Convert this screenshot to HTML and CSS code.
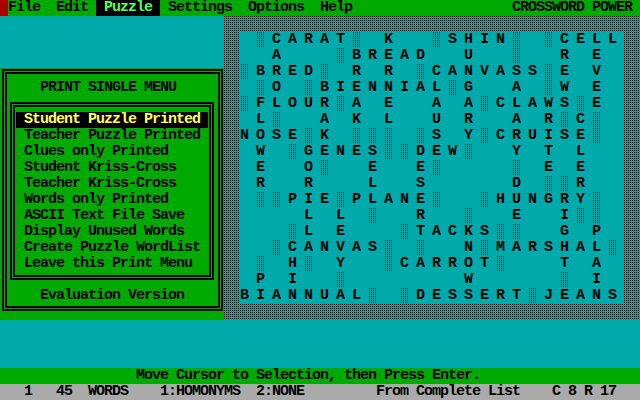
FILE: index.html
```html
<!DOCTYPE html>
<html>
<head>
<meta charset="utf-8">
<link rel="stylesheet" href="styles.css">
</head>
<body>
<div class="screen">
  <div class="menubar"><span class="mark"></span><span>File  Edit </span><span class="sel"> Puzzle </span><span> Settings  Options  Help</span><span class="brand">CROSSWORD POWER</span></div>
  <div class="main">
    <div class="panel">
      <div class="dbl">
        <div class="dbl-in">
          <div class="title">PRINT SINGLE MENU</div>
          <div class="dbl menu-box">
            <div class="dbl-in items">
              <div class="item active">Student Puzzle Printed</div>
              <div class="item">Teacher Puzzle Printed</div>
              <div class="item">Clues only Printed</div>
              <div class="item">Student Kriss-Cross</div>
              <div class="item">Teacher Kriss-Cross</div>
              <div class="item">Words only Printed</div>
              <div class="item">ASCII Text File Save</div>
              <div class="item">Display Unused Words</div>
              <div class="item">Create Puzzle WordList</div>
              <div class="item">Leave this Print Menu</div>
            </div>
          </div>
          <div class="eval">Evaluation Version</div>
        </div>
      </div>
    </div>
    <div class="board">
      <div class="grid">
        <div class="r">  <i></i> C A R A T <i></i>   K     <i></i> S H I N <i></i>   <i></i> C E L L </div>
        <div class="r">    A       <i></i> B R E A D     U     <i></i>     R   E </div>
        <div class="r"><i></i> B R E D <i></i>   R   R   <i></i> C A N V A S S <i></i> E   V </div>
        <div class="r">  <i></i> O   <i></i> B I E N N I A L <i></i> G     A   <i></i> W   E </div>
        <div class="r"><i></i> F L O U R <i></i> A   E     A   A <i></i> C L A W S <i></i> E </div>
        <div class="r">  L <i></i>     A   K   L     U   R     A   R <i></i> C <i></i> </div>
        <div class="r">N O S E <i></i> K   <i></i> <i></i> <i></i>   <i></i> S   Y <i></i> C R U I S E <i></i> </div>
        <div class="r">  W   <i></i> G E N E S <i></i> <i></i> D E W <i></i>     Y   T   L </div>
        <div class="r">  E     O <i></i>     E     E <i></i>         <i></i>   E   E </div>
        <div class="r">  R     R       L     S           D   <i></i> <i></i> R </div>
        <div class="r">  <i></i> <i></i> P I E <i></i> P L A N E <i></i>     <i></i> H U N G R Y <i></i> </div>
        <div class="r">        L   L   <i></i>     R     <i></i>     E     I <i></i> <i></i> </div>
        <div class="r">      <i></i> L   E       <i></i> T A C K S <i></i> <i></i>     G   P </div>
        <div class="r">    <i></i> C A N V A S <i></i>   <i></i>     N <i></i> M A R S H A L <i></i> </div>
        <div class="r">  <i></i>   H <i></i>   Y     <i></i> C A R R O T <i></i>       T   A </div>
        <div class="r">  P   I     <i></i>               W           <i></i>   I </div>
        <div class="r">B I A N N U A L <i></i>   <i></i> D E S S E R T <i></i> J E A N S </div>
      </div>
    </div>
  </div>
  <div class="msg">Move Cursor to Selection, then Press Enter.</div>
  <div class="status">   1   45  WORDS    1:HOMONYMS  2:NONE         From Complete List    C 8 R 17</div>
</div>
</body>
</html>
```

FILE: styles.css
```css
body {
  margin: 0;
  background: #000;
}

.screen {
  width: 640px;
  height: 400px;
  overflow: hidden;
  background: #00aaaa;
  color: #000;
  font-family: "Liberation Mono", "DejaVu Sans Mono", monospace;
  font-weight: bold;
  font-size: 15px;
  line-height: 16px;
  letter-spacing: -1px;
  display: flex;
  flex-direction: column;
}

.menubar {
  height: 16px;
  background: #00aa00;
  display: flex;
  white-space: pre;
}

.menubar .mark {
  width: 8px;
  background: #aa0000;
}

.menubar .sel {
  background: #000;
  color: #55ff55;
}

.menubar .brand {
  margin-left: auto;
  margin-right: 8px;
}

.main {
  height: 352px;
  display: flex;
  align-items: flex-start;
}

.panel {
  width: 224px;
  height: 252px;
  margin-top: 52px;
  box-sizing: border-box;
  padding: 1px 1px 9px 2px;
  background: #00aa00;
}

.dbl {
  border: 2px solid #000;
  padding: 1px;
}

.dbl-in {
  border: 2px solid #000;
}

.title,
.eval {
  height: 16px;
  padding-left: 33px;
  white-space: pre;
}

.title {
  margin-top: 6px;
}

.menu-box {
  margin: 6px 4px 0 3px;
}

.items {
  padding: 5px 1px 3px;
}

.item {
  height: 16px;
  padding-left: 8px;
  white-space: pre;
}

.item.active {
  background: #000;
  color: #ffff55;
}

.eval {
  margin-top: 8px;
  margin-bottom: 2px;
}

.board {
  width: 416px;
  height: 304px;
  box-sizing: border-box;
  padding: 16px;
  background:
    linear-gradient(90deg, transparent 1px, #00aaaa 1px) 0 0 / 2px 2px,
    linear-gradient(transparent 1px, #00aaaa 1px) 0 0 / 2px 2px,
    #000;
}

.grid {
  height: 272px;
  background: #00aaaa;
}

.grid .r {
  height: 16px;
  white-space: pre;
}

.grid i {
  display: inline-block;
  vertical-align: top;
  width: 7px;
  height: 16px;
  margin-left: 1px;
  background:
    linear-gradient(90deg, transparent 1px, #00aaaa 1px) 0 0 / 2px 2px,
    linear-gradient(transparent 1px, #00aaaa 1px) 0 0 / 2px 2px,
    #000;
}

.msg {
  height: 16px;
  padding-left: 136px;
  background: #00aa00;
  white-space: pre;
}

.status {
  height: 16px;
  background: #aaaaaa;
  white-space: pre;
}
```
